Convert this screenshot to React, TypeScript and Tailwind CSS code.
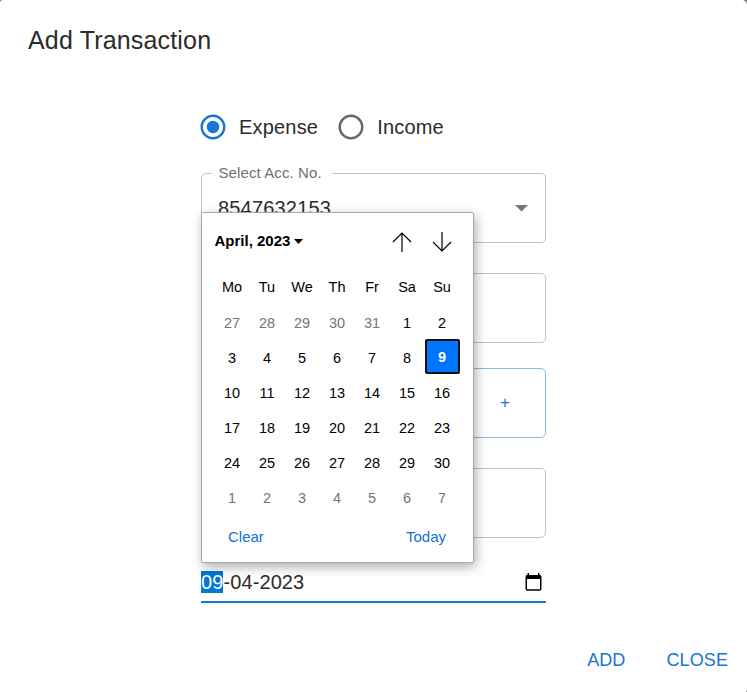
const weeks = [
  [27, 28, 29, 30, 31, 1, 2],
  [3, 4, 5, 6, 7, 8, 9],
  [10, 11, 12, 13, 14, 15, 16],
  [17, 18, 19, 20, 21, 22, 23],
  [24, 25, 26, 27, 28, 29, 30],
  [1, 2, 3, 4, 5, 6, 7],
];

function Radio({ checked, label }: { checked?: boolean; label: string }) {
  return (
    <label className="flex items-center">
      <svg viewBox="0 0 24 24" className={checked ? 'size-[30px] text-[#1976d2]' : 'size-[30px] text-[#666666]'} fill="currentColor">
        <path d="M12 2C6.48 2 2 6.48 2 12s4.48 10 10 10 10-4.48 10-10S17.52 2 12 2zm0 18c-4.42 0-8-3.58-8-8s3.58-8 8-8 8 3.58 8 8-3.58 8-8 8z" />
        {checked && <circle cx="12" cy="12" r="5" />}
      </svg>
      <span className="ml-[11px] text-[20px] leading-[30px] tracking-[0.188px]">{label}</span>
    </label>
  );
}

function Calendar() {
  return (
    <div className="absolute left-0 top-[39px] z-10 h-[351px] w-[273px] rounded-[2px] border border-[#a9a9a9] bg-white text-[14.5px] text-black shadow-[2px_4px_12px_rgba(0,0,0,0.32)]">
      <div className="flex h-[57px] items-center pl-[12.5px] pr-[21px]">
        <span className="text-[15px] font-bold">April, 2023</span>
        <svg viewBox="0 0 9 5" className="ml-[4px] h-[5px] w-[9px]"><path d="M0 0h9L4.5 5z" /></svg>
        <svg viewBox="0 0 20 20" className="ml-auto size-[20px]" fill="none" stroke="black" strokeWidth="1.2"><path d="M10 20V1M1 10l9-9 9 9" /></svg>
        <svg viewBox="0 0 20 20" className="ml-[20px] size-[20px]" fill="none" stroke="black" strokeWidth="1.2"><path d="M10 0v19M1 10l9 9 9-9" /></svg>
      </div>
      <div className="ml-[12.5px] grid w-[245px] grid-cols-7 text-center">
        {['Mo', 'Tu', 'We', 'Th', 'Fr', 'Sa', 'Su'].map((d) => (
          <div key={d} className="h-[35px] leading-[35px]">{d}</div>
        ))}
        {weeks.map((week, w) =>
          week.map((day, d) => {
            const outside = (w === 0 && day > 20) || w === 5;
            const selected = w === 1 && day === 9;
            return (
              <div
                key={`${w}-${d}`}
                className={
                  selected
                    ? 'h-[35px] -translate-y-px rounded-[2px] border-2 border-[#101010] bg-[#0075ff] font-bold leading-[33px] text-white'
                    : outside
                      ? 'h-[35px] leading-[37px] text-[#757575]'
                      : 'h-[35px] leading-[37px]'
                }
              >
                {day}
              </div>
            );
          }),
        )}
      </div>
      <div className="flex justify-between pl-[26px] pr-[27px] pt-[11px] text-[15px] leading-[22px] text-[#1070dc]">
        <span>Clear</span>
        <span>Today</span>
      </div>
    </div>
  );
}

export default function App() {
  return (
    <div className="h-[692px] w-[747px] overflow-hidden bg-[#777777] font-['Liberation_Sans',Arial,sans-serif]">
      <div className="flex h-[693px] w-full flex-col rounded-tl-[3px] rounded-tr-[5px] rounded-br-[4px] bg-white text-[#2b2b2b]">
        <h2 className="pl-[28px] pt-[20px] text-[25px] font-normal leading-[40px] tracking-[0.17px]">Add Transaction</h2>
        <div className="ml-[201px] mt-[52px] flex w-[345px] flex-col">
          <div className="-ml-[3px] flex gap-[18px]">
            <Radio checked label="Expense" />
            <Radio label="Income" />
          </div>
          <div className="relative mt-[31px] flex flex-col">
            <div className="relative flex h-[70px] items-center justify-between rounded-[5px] border border-[#c4c4c4] pl-[16px] pr-[17px]">
              <span className="absolute -top-[11px] left-[10px] bg-white pl-[6.5px] pr-[10px] text-[15px] leading-[20px] tracking-[0.1px] text-[#707070]">Select Acc. No.</span>
              <span className="text-[20px] leading-[26px] tracking-[0.188px]">8547632153</span>
              <svg viewBox="0 0 13 7" className="mt-px h-[7px] w-[13px] fill-[#757575]"><path d="M0 0h13L6.5 6.5z" /></svg>
            </div>
            <div className="mt-[30px] h-[70px] rounded-[5px] border border-[#c4c4c4]" />
            <div className="mt-[25px] flex h-[70px] items-center justify-end rounded-[5px] border border-[#8cbae8] pr-[35px] text-[17px] font-medium text-[#1976d2]">+</div>
            <div className="mt-[30px] h-[70px] rounded-[5px] border border-[#c4c4c4]" />
            <Calendar />
          </div>
          <div className="mt-[24px] flex h-[41px] items-center justify-between border-b-2 border-[#1976d2] pr-[4px] text-[20px] leading-[22px] tracking-[0.1px]">
            <span><span className="inline-block bg-[#0078d7] text-white">09</span>-04-2023</span>
            <svg viewBox="0 0 17 18" className="h-[18px] w-[17px]" fill="black"><path fillRule="evenodd" d="M2.5 0H4v2h9V0h1.5v2H15q1.5 0 1.5 1.8V16q0 1.8-1.8 1.8H2.3Q.5 17.8.5 16V4Q.5 2 2 2h.5zM2 6v10.2h13V6z" /></svg>
          </div>
        </div>
        <div className="mt-[41px] flex justify-end gap-[41px] pr-[19px] text-[18px] leading-[32px] tracking-[0.1px] text-[#1976d2]">
          <button>ADD</button>
          <button>CLOSE</button>
        </div>
      </div>
    </div>
  );
}
